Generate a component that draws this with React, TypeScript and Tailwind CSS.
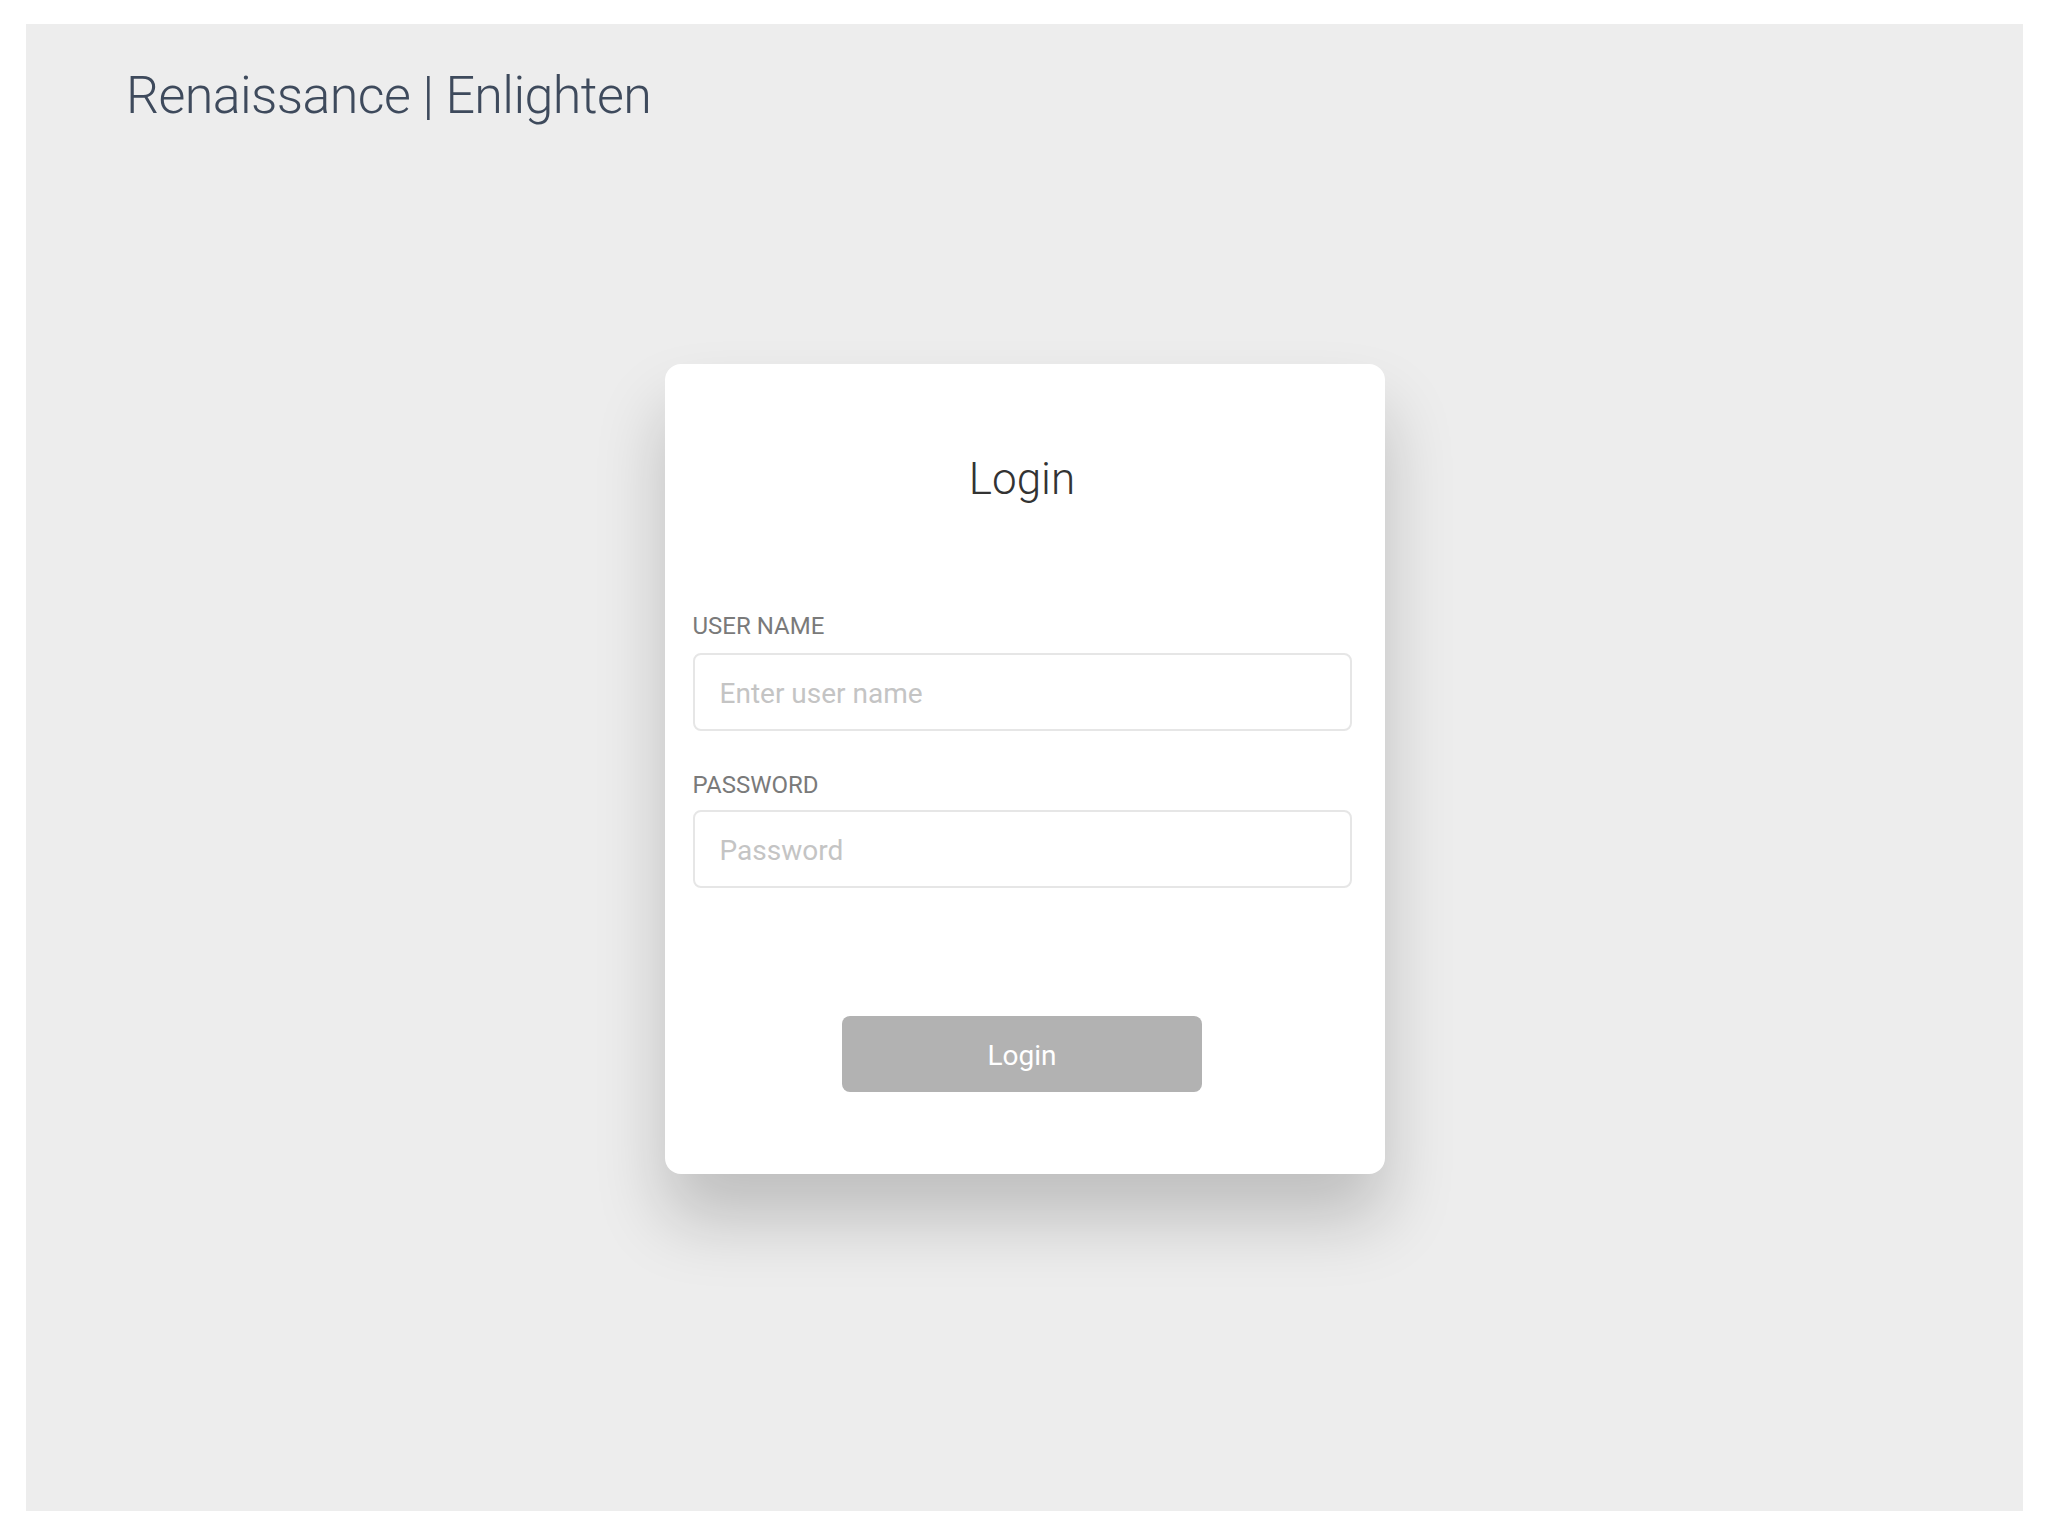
import React from "react";

export default function App() {
  return (
    <div className="min-h-screen bg-white pl-[26px] pr-[25px] pt-[24px] pb-[25px]" style={{ fontFamily: "Roboto, 'Noto Sans', sans-serif" }}>
      <div className="flex h-[1487px] flex-col bg-[#ededed]">
        <div className="pl-[100px] pt-[46px]">
          <h1 className="text-[52px] font-light leading-none tracking-[-0.6px] text-[#3e4a5c]">Renaissance | Enlighten</h1>
        </div>
        <div className="mx-auto mt-[242px] w-[720px] rounded-[16px] bg-white pl-[28px] pr-[33px] pt-[93px] pb-[82px] shadow-[0_45px_70px_rgba(0,0,0,0.2)]">
          <h2 className="text-center text-[44px] font-light leading-none text-[#333333]">Login</h2>
          <div className="mt-[113px] flex flex-col">
            <label className="text-[24px] leading-none text-[#7a7a7a]">USER NAME</label>
            <input
              type="text"
              placeholder="Enter user name"
              className="mt-[15px] h-[78px] w-full rounded-[8px] border-2 border-[#e6e6e6] bg-white pl-[25px] pt-[2px] text-[28px] text-[#333] outline-none placeholder:text-[#c4c4c4]"
            />
            <label className="mt-[42px] text-[24px] leading-none text-[#7a7a7a]">PASSWORD</label>
            <input
              type="password"
              placeholder="Password"
              className="mt-[13px] h-[78px] w-full rounded-[8px] border-2 border-[#e6e6e6] bg-white pl-[25px] pt-[2px] text-[28px] text-[#333] outline-none placeholder:text-[#c4c4c4]"
            />
          </div>
          <div className="mt-[128px] flex justify-center">
            <button className="h-[76px] w-[360px] rounded-[8px] bg-[#b2b2b2] pt-[4px] text-[28px] text-white">Login</button>
          </div>
        </div>
      </div>
    </div>
  );
}
